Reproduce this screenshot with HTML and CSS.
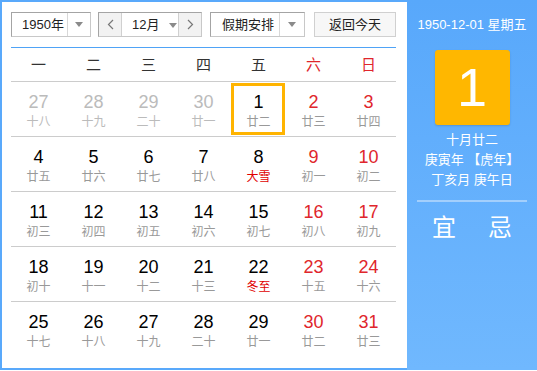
FILE: index.html
```html
<!DOCTYPE html>
<html>

<head>
  <meta charset="utf-8">
  <title>万年历</title>
  <link rel="stylesheet" href="styles.css">
</head>

<body>
  <div class="calendar">
    <div class="main">
      <div class="toolbar">
        <div class="select year">
          <span class="label">1950年</span>
          <span class="drop"><i class="caret"></i></span>
        </div>
        <div class="select month">
          <span class="step"><svg width="7" height="11" viewBox="0 0 7 11"><polyline points="6,1 1.5,5.5 6,10" fill="none" stroke="#777" stroke-width="1.2"/></svg></span>
          <span class="label">12月 <i class="caret"></i></span>
          <span class="step next"><svg width="7" height="11" viewBox="0 0 7 11"><polyline points="1,1 5.5,5.5 1,10" fill="none" stroke="#777" stroke-width="1.2"/></svg></span>
        </div>
        <div class="select holiday">
          <span class="label">假期安排</span>
          <span class="drop"><i class="caret"></i></span>
        </div>
        <button class="today-btn">返回今天</button>
      </div>

      <div class="week-head">
        <span>一</span><span>二</span><span>三</span><span>四</span><span>五</span>
        <span class="weekend">六</span><span class="weekend">日</span>
      </div>

      <div class="days">
        <div class="row">
          <div class="day other"><b>27</b><small>十八</small></div>
          <div class="day other"><b>28</b><small>十九</small></div>
          <div class="day other"><b>29</b><small>二十</small></div>
          <div class="day other"><b>30</b><small>廿一</small></div>
          <div class="day current"><b>1</b><small>廿二</small></div>
          <div class="day weekend"><b>2</b><small>廿三</small></div>
          <div class="day weekend"><b>3</b><small>廿四</small></div>
        </div>
        <div class="row">
          <div class="day"><b>4</b><small>廿五</small></div>
          <div class="day"><b>5</b><small>廿六</small></div>
          <div class="day"><b>6</b><small>廿七</small></div>
          <div class="day"><b>7</b><small>廿八</small></div>
          <div class="day term"><b>8</b><small>大雪</small></div>
          <div class="day weekend"><b>9</b><small>初一</small></div>
          <div class="day weekend"><b>10</b><small>初二</small></div>
        </div>
        <div class="row">
          <div class="day"><b>11</b><small>初三</small></div>
          <div class="day"><b>12</b><small>初四</small></div>
          <div class="day"><b>13</b><small>初五</small></div>
          <div class="day"><b>14</b><small>初六</small></div>
          <div class="day"><b>15</b><small>初七</small></div>
          <div class="day weekend"><b>16</b><small>初八</small></div>
          <div class="day weekend"><b>17</b><small>初九</small></div>
        </div>
        <div class="row">
          <div class="day"><b>18</b><small>初十</small></div>
          <div class="day"><b>19</b><small>十一</small></div>
          <div class="day"><b>20</b><small>十二</small></div>
          <div class="day"><b>21</b><small>十三</small></div>
          <div class="day term"><b>22</b><small>冬至</small></div>
          <div class="day weekend"><b>23</b><small>十五</small></div>
          <div class="day weekend"><b>24</b><small>十六</small></div>
        </div>
        <div class="row">
          <div class="day"><b>25</b><small>十七</small></div>
          <div class="day"><b>26</b><small>十八</small></div>
          <div class="day"><b>27</b><small>十九</small></div>
          <div class="day"><b>28</b><small>二十</small></div>
          <div class="day"><b>29</b><small>廿一</small></div>
          <div class="day weekend"><b>30</b><small>廿二</small></div>
          <div class="day weekend"><b>31</b><small>廿三</small></div>
        </div>
      </div>
    </div>

    <div class="side">
      <div class="side-date">1950-12-01 星期五</div>
      <div class="big-day">1</div>
      <div class="lunar">
        <div>十月廿二</div>
        <div>庚寅年 【虎年】</div>
        <div>丁亥月 庚午日</div>
      </div>
      <div class="divider"></div>
      <div class="yiji"><span>宜</span><span>忌</span></div>
    </div>
  </div>
</body>

</html>
```

FILE: styles.css
```css
html,
body {
  margin: 0;
  padding: 0;
  background: #fff;
  font-family: "Liberation Sans", "Noto Sans CJK SC", sans-serif;
}

.calendar {
  width: 537px;
  height: 370px;
  display: flex;
}

.main {
  width: 407px;
  height: 370px;
  box-sizing: border-box;
  border: 2px solid #59a9fb;
  border-right: none;
  padding: 10px 11px 0 9px;
  background: #fff;
}

/* toolbar */
.toolbar {
  display: flex;
  height: 25px;
  padding-bottom: 10px;
  border-bottom: 1px solid #4fa3f6;
}

.select {
  display: flex;
  height: 25px;
  box-sizing: border-box;
  border: 1px solid;
  border-color: #a4a4a4 #c8c8c8 #c8c8c8 #a4a4a4;
  font-size: 13px;
  color: #222;
}

.select .label {
  flex-grow: 1;
  line-height: 23px;
  padding-left: 10px;
}

.select .drop {
  width: 22px;
  border-left: 1px solid #d8d8d8;
  display: flex;
  align-items: center;
  justify-content: center;
}

.caret {
  display: inline-block;
  width: 0;
  height: 0;
  border-left: 4px solid transparent;
  border-right: 4px solid transparent;
  border-top: 5px solid #8a8a8a;
  vertical-align: middle;
}

.year {
  width: 80px;
}

.month {
  width: 104px;
  margin-left: 7px;
}

.month .step {
  width: 22px;
  background: #f2f2f2;
  border-right: 1px solid #d0d0d0;
  display: flex;
  align-items: center;
  justify-content: center;
}

.month .step.next {
  border-right: none;
  border-left: 1px solid #d0d0d0;
}

.month .label {
  padding-left: 10px;
}

.month .caret {
  margin-left: 6px;
}

.holiday {
  width: 95px;
  margin-left: 8px;
}

.holiday .label {
  padding-left: 11px;
}

.holiday .drop {
  width: 24px;
}

.today-btn {
  all: unset;
  width: 82px;
  height: 25px;
  margin-left: 9px;
  box-sizing: border-box;
  border: 1px solid #d0d0d0;
  background: #f7f7f7;
  text-align: center;
  font-size: 13px;
  line-height: 23px;
  color: #222;
}

/* week header */
.week-head {
  display: flex;
  height: 33px;
  border-bottom: 1px solid #ccc;
}

.week-head span {
  width: 55px;
  text-align: center;
  line-height: 33px;
  font-size: 15px;
  color: #333;
}

.week-head .weekend {
  color: #e0262c;
}

/* days */
.row {
  display: flex;
  border-bottom: 1px solid #ccc;
}

.row:last-child {
  border-bottom: none;
}

.day {
  position: relative;
  width: 55px;
  height: 54px;
  box-sizing: border-box;
  padding-top: 10px;
  text-align: center;
}

.day b {
  display: block;
  font-weight: normal;
  font-size: 18px;
  line-height: 20px;
  color: #000;
}

.day small {
  display: block;
  font-size: 12px;
  line-height: 20px;
  color: #999;
}

.day.weekend b {
  color: #e0262c;
}

.day.term small {
  color: #e00000;
}

.day.other b,
.day.other small {
  color: #bbb;
}

.day.current::after {
  content: "";
  position: absolute;
  top: 1px;
  left: 0;
  right: 1px;
  bottom: 1px;
  border: 3px solid #ffb400;
}

/* side panel */
.side {
  width: 130px;
  height: 370px;
  background: linear-gradient(#58a8fb, #70b8fe);
  color: #fff;
  text-align: center;
}

.side-date {
  padding-top: 15px;
  font-size: 13px;
  line-height: 20px;
}

.big-day {
  width: 75px;
  height: 75px;
  margin: 15px auto 0;
  background: #ffb700;
  border-radius: 3px;
  box-shadow: 0 1px 2px rgba(0, 0, 0, 0.15);
  font-size: 54px;
  line-height: 75px;
}

.lunar {
  margin-top: 5px;
  font-size: 13px;
  line-height: 20px;
}

.divider {
  width: 110px;
  height: 2px;
  margin: 10px auto 0;
  background: #a3cffc;
}

.yiji {
  margin-top: 11px;
  font-size: 24px;
  line-height: 30px;
  display: flex;
  justify-content: center;
  gap: 32px;
}
```
